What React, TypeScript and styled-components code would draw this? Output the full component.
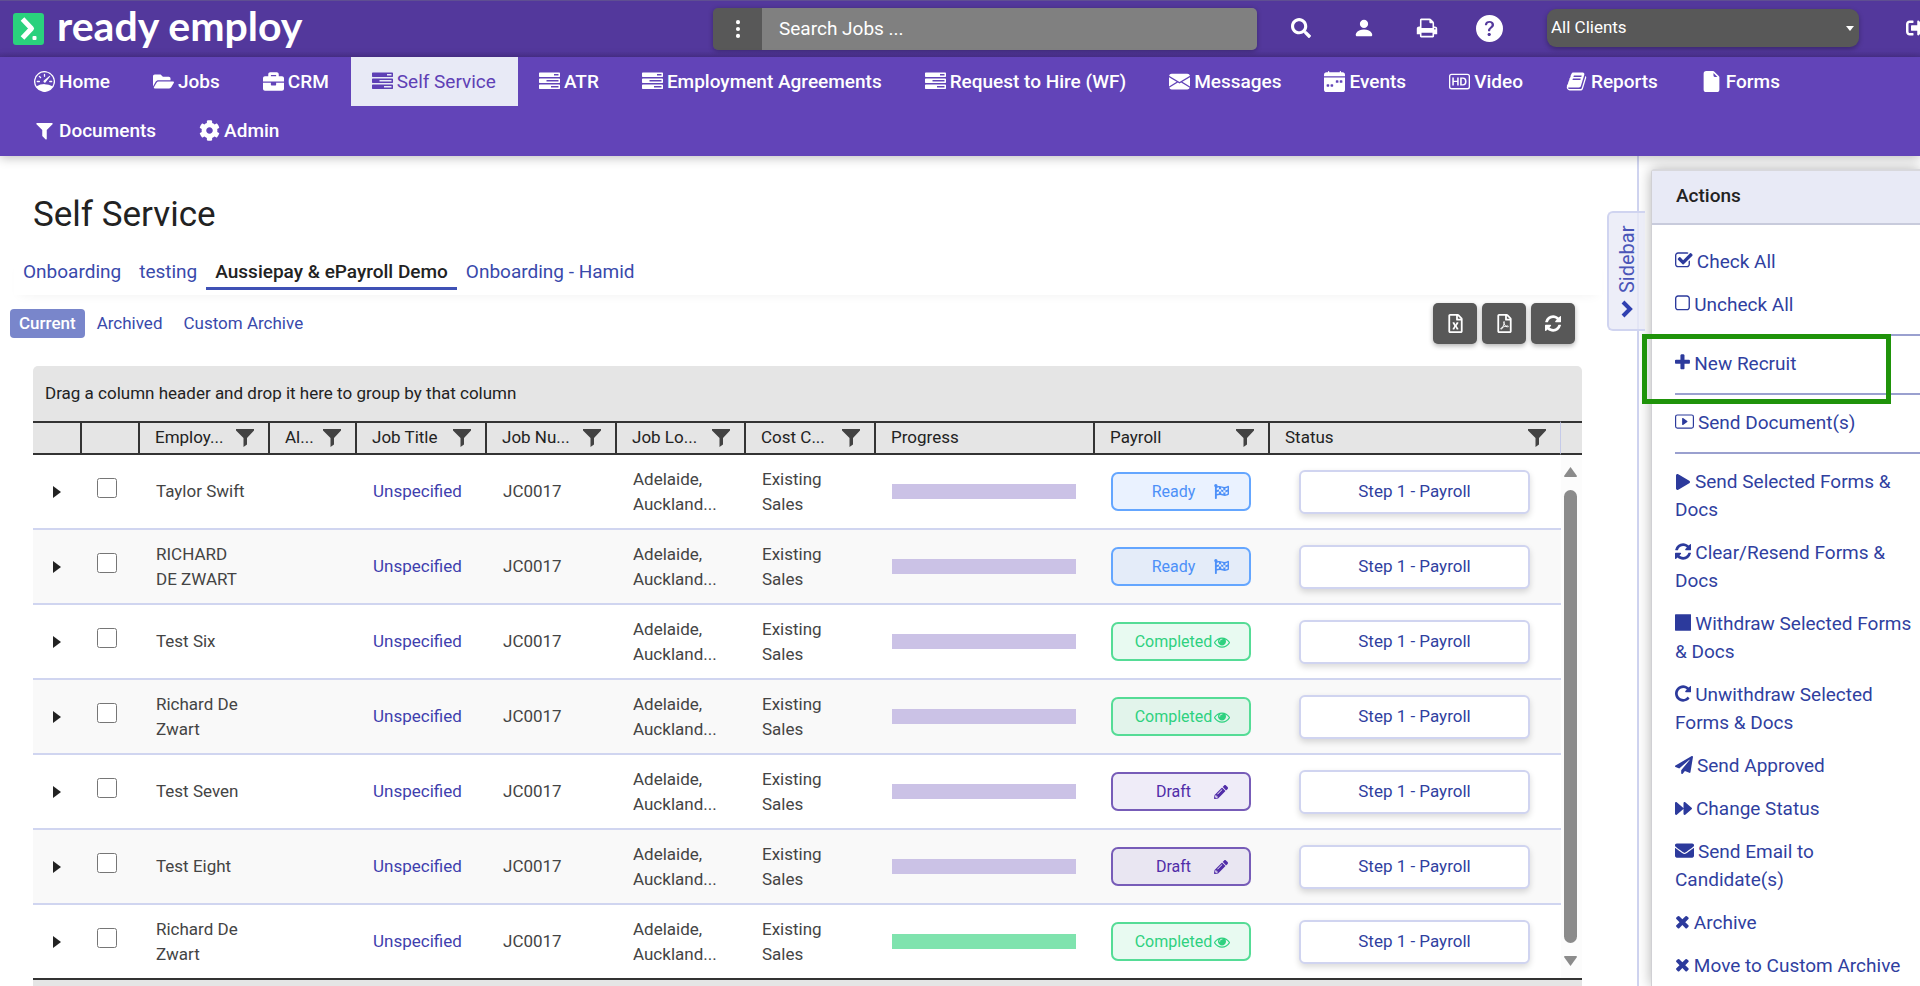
import React from "react";
import styled, { createGlobalStyle, css } from "styled-components";
import {
  FaBriefcase,
  FaCog,
  FaEnvelope,
  FaFlagCheckered,
  FaFolderOpen,
  FaForward,
  FaPaperPlane,
  FaPencilAlt,
  FaPlay,
  FaRegFileExcel,
  FaRegFilePdf,
  FaSearch,
  FaSignOutAlt,
} from "react-icons/fa";
import {
  BsBadgeHd,
  BsCalendarWeekFill,
  BsEnvelopeFill,
  BsFileEarmarkFill,
  BsPersonFill,
  BsPlayBtn,
  BsQuestionCircleFill,
  BsSpeedometer,
  BsThreeDotsVertical,
} from "react-icons/bs";

/* ---------- icons ---------- */

/* Glyphs are drawn on a 1792-unit grid; left and span trim the side bearings. */
const glyph = (d: string, left = 0, span = 1792) =>
  function Glyph() {
    return (
      <svg viewBox={`${left} 0 ${span} 1792`} height="1em" fill="currentColor" aria-hidden="true">
        <path d={d} />
      </svg>
    );
  };

const TasksIcon = glyph(
  "M1024 1408h640v-128h-640v128zm-384-512h1024v-128h-1024v128zm640-512h384v-128h-384v128zm512 832v256q0 26-19 45t-45 19h-1664q-26 0-45-19t-19-45v-256q0-26 19-45t45-19h1664q26 0 45 19t19 45zm0-512v256q0 26-19 45t-45 19h-1664q-26 0-45-19t-19-45v-256q0-26 19-45t45-19h1664q26 0 45 19t19 45zm0-512v256q0 26-19 45t-45 19h-1664q-26 0-45-19t-19-45v-256q0-26 19-45t45-19h1664q26 0 45 19t19 45z"
);
const RefreshIcon = glyph(
  "M1639 1056q0 5-1 7-64 268-268 434.5t-478 166.5q-146 0-282.5-55t-243.5-157l-129 129q-19 19-45 19t-45-19-19-45v-448q0-26 19-45t45-19h448q26 0 45 19t19 45-19 45l-137 137q71 66 161 102t187 36q134 0 250-65t186-179q11-17 53-117 8-23 30-23h192q13 0 22.5 9.5t9.5 22.5zm25-800v448q0 26-19 45t-45 19h-448q-26 0-45-19t-19-45 19-45l138-138q-148-137-349-137-134 0-250 65t-186 179q-11 17-53 117-8 23-30 23h-199q-13 0-22.5-9.5t-9.5-22.5v-7q65-268 270-434.5t480-166.5q146 0 284 55.5t245 156.5l130-129q19-19 45-19t45 19 19 45z",
  128,
  1536
);
const RepeatIcon = glyph(
  "M1664 256v448q0 26-19 45t-45 19h-448q-42 0-59-40-17-39 14-69l138-138q-148-137-349-137-104 0-198.5 40.5t-163.5 109.5-109.5 163.5-40.5 198.5 40.5 198.5 109.5 163.5 163.5 109.5 198.5 40.5q119 0 225-52t179-147q7-10 23-12 15 0 25 9l137 138q9 8 9.5 20.5t-7.5 22.5q-109 132-264 204.5t-327 72.5q-156 0-298-61t-245-164-164-245-61-298 61-298 164-245 245-164 298-61q147 0 284.5 55.5t244.5 156.5l130-129q29-31 70-14 39 17 39 59z",
  128,
  1536
);
const CheckSquareIcon = glyph(
  "M1472 930v318q0 119-84.5 203.5t-203.5 84.5h-832q-119 0-203.5-84.5t-84.5-203.5v-832q0-119 84.5-203.5t203.5-84.5h832q63 0 117 25 15 7 18 23 3 17-9 29l-49 49q-10 10-23 10-3 0-9-2-23-6-45-6h-832q-66 0-113 47t-47 113v832q0 66 47 113t113 47h832q66 0 113-47t47-113v-254q0-13 9-22l64-64q10-10 23-10 6 0 12 3 20 8 20 29zm231-489l-814 814q-24 24-57 24t-57-24l-430-430q-24-24-24-57t24-57l110-110q24-24 57-24t57 24l263 263 647-647q24-24 57-24t57 24l110 110q24 24 24 57t-24 57z",
  64,
  1680
);
const SquareIcon = glyph(
  "M1312 256h-832q-66 0-113 47t-47 113v832q0 66 47 113t113 47h832q66 0 113-47t47-113v-832q0-66-47-113t-113-47zm288 160v832q0 119-84.5 203.5t-203.5 84.5h-832q-119 0-203.5-84.5t-84.5-203.5v-832q0-119 84.5-203.5t203.5-84.5h832q119 0 203.5 84.5t84.5 203.5z",
  192,
  1440
);
const PlusIcon = glyph(
  "M1600 736v192q0 40-28 68t-68 28h-416v416q0 40-28 68t-68 28h-192q-40 0-68-28t-28-68v-416h-416q-40 0-68-28t-28-68v-192q0-40 28-68t68-28h416v-416q0-40 28-68t68-28h192q40 0 68 28t28 68v416h416q40 0 68 28t28 68z",
  192,
  1440
);
const TimesIcon = glyph(
  "M1490 1322q0 40-28 68l-136 136q-28 28-68 28t-68-28l-294-294-294 294q-28 28-68 28t-68-28l-136-136q-28-28-28-68t28-68l294-294-294-294q-28-28-28-68t28-68l136-136q28-28 68-28t68 28l294 294 294-294q28-28 68-28t68 28l136 136q28 28 28 68t-28 68l-294 294 294 294q28 28 28 68z",
  200,
  1400
);
const StopIcon = glyph(
  "M1664 192v1408q0 26-19 45t-45 19h-1408q-26 0-45-19t-19-45v-1408q0-26 19-45t45-19h1408q26 0 45 19t19 45z",
  128,
  1536
);
const PrintIcon = glyph(
  "M448 1536h896v-256h-896v256zm0-640h896v-384h-160q-40 0-68-28t-28-68v-160h-640v640zm1152 64q0-26-19-45t-45-19-45 19-19 45 19 45 45 19 45-19 19-45zm128 0v416q0 13-9.5 22.5t-22.5 9.5h-224v160q0 40-28 68t-68 28h-960q-40 0-68-28t-28-68v-160h-224q-13 0-22.5-9.5t-9.5-22.5v-416q0-79 56.5-135.5t135.5-56.5h64v-544q0-40 28-68t68-28h672q40 0 88 20t76 48l152 152q28 28 48 76t20 88v256h64q79 0 135.5 56.5t56.5 135.5z"
);
const EyeIcon = glyph(
  "M1664 960q-152-236-381-353 61 104 61 225 0 185-131.5 316.5t-316.5 131.5-316.5-131.5-131.5-316.5q0-121 61-225-229 117-381 353 133 205 333.5 326.5t434.5 121.5 434.5-121.5 333.5-326.5zm-720-384q0-20-14-34t-34-14q-125 0-214.5 89.5t-89.5 214.5q0 20 14 34t34 14 34-14 14-34q0-86 61-147t147-61q20 0 34-14t14-34zm848 384q0 34-20 69-140 230-376.5 368.5t-499.5 138.5-499.5-139-376.5-368q-20-35-20-69t20-69q140-229 376.5-368t499.5-139 499.5 139 376.5 368q20 35 20 69z"
);
const FilterIcon = glyph(
  "M1595 295q17 41-14 70l-493 493v742q0 42-39 59-13 5-25 5-27 0-45-19l-256-256q-19-19-19-45v-486l-493-493q-31-29-14-70 17-39 59-39h1280q42 0 59 39z"
);
const BookIcon = glyph(
  "M1703 478q40 57 18 129l-275 906q-19 64-76.5 107.5t-122.5 43.5h-923q-77 0-148.5-53.5t-99.5-131.5q-24-67-2-127 0-4 3-27t4-37q1-8-3-21.5t-3-19.5q2-11 8-21t16.5-23.5 16.5-23.5q23-38 45-91.5t30-91.5q3-10 .5-30t-.5-28q3-11 17-28t17-23q21-36 42-92t25-90q1-9-2.5-32t.5-28q4-13 22-30.5t22-22.5q19-26 42.5-84.5t27.5-96.5q1-8-3-25.5t-2-26.5q2-8 9-18t18-23 17-21q8-12 16.5-30.5t15-35 16-36 19.5-32 26.5-23.5 36-11.5 47.5 5.5l-1 3q38-9 51-9h761q74 0 114 56t18 130l-274 906q-36 119-71.5 153.5t-128.5 34.5h-869q-27 0-38 15-11 16-1 43 24 70 144 70h923q29 0 56-15.5t35-41.5l300-987q7-22 5-57 38 15 59 43zm-1064 2q-4 13 2 22.5t20 9.5h608q13 0 25.5-9.5t16.5-22.5l21-64q4-13-2-22.5t-20-9.5h-608q-13 0-25.5 9.5t-16.5 22.5zm-83 256q-4 13 2 22.5t20 9.5h608q13 0 25.5-9.5t16.5-22.5l21-64q4-13-2-22.5t-20-9.5h-608q-13 0-25.5 9.5t-16.5 22.5z"
);

const Chevron = () => (
  <svg viewBox="0 0 12 18" width="12" height="18" fill="none" stroke="currentColor" strokeWidth="4" aria-hidden="true">
    <path d="M2 2l7 7-7 7" />
  </svg>
);

const Funnel = () => (
  <svg viewBox="0 0 18 18" width="18" height="18" fill="#424242" aria-hidden="true">
    <path d="M0 0h18v1.5L11 9v6.5L7.5 18V9L0 1.5z" />
  </svg>
);

const LogoMark = () => (
  <svg viewBox="0 0 31 32" width="31" height="32" aria-hidden="true">
    <rect width="31" height="32" rx="3" fill="#2ad17d" />
    <path d="M9.500 6l9 9.500-9 9.500" fill="none" stroke="#fff" strokeWidth="5" strokeLinejoin="round" />
    <rect x="19.500" y="23" width="4" height="4" rx="1" fill="#fff" />
  </svg>
);

/* ---------- page ---------- */

const GlobalStyle = createGlobalStyle`
  *, *::before, *::after { box-sizing: border-box; }
  body {
    margin: 0;
    background: #fff;
    color: #222;
    font-family: Roboto, "Liberation Sans", sans-serif;
    font-size: 17px;
  }
  button, input, select { font: inherit; }
  a { text-decoration: none; color: inherit; }
  svg { display: block; flex: none; }
`;

const Page = styled.div`
  display: flex;
  flex-direction: column;
  height: 100vh;
  overflow: hidden;
`;

const TopBar = styled.header`
  flex: none;
  display: flex;
  align-items: center;
  height: 57px;
  border-top: 1px solid #5f4f92;
  background: linear-gradient(#53389c 90%, #4b318f);
  color: #fff;
`;

const Brand = styled.a`
  flex: 1;
  display: flex;
  align-items: center;
  gap: 13px;
  padding-left: 13px;
  color: #fff;
`;

const BrandName = styled.span`
  font: 700 41px/44px Lato, sans-serif;
  padding-bottom: 7px;
`;

const SearchBox = styled.form`
  display: flex;
  width: 544px;
  height: 42px;
  border-radius: 5px;
  box-shadow: 0 1px 5px rgba(0, 0, 0, 0.3);
`;

const SearchMenu = styled.button`
  display: flex;
  align-items: center;
  justify-content: center;
  width: 49px;
  padding: 0;
  border: 0;
  border-radius: 5px 0 0 5px;
  background: #585858;
  color: #fff;
  font-size: 22px;
`;

const SearchInput = styled.input`
  flex: 1;
  min-width: 0;
  padding: 0 17px 2px;
  border: 0;
  border-radius: 0 5px 5px 0;
  background: #808080;
  color: #fff;
  font-size: 19px;
  &::placeholder { color: #fff; opacity: 1; }
`;

const TopIcons = styled.div`
  display: flex;
  margin: 0 26px 0 12px;
`;

const TopIcon = styled.button<{ $size?: number }>`
  display: flex;
  align-items: center;
  justify-content: center;
  width: 63px;
  height: 42px;
  padding: 0 0 2px;
  border: 0;
  background: none;
  color: #fff;
  font-size: ${(p) => p.$size ?? 20}px;
`;

const ClientPicker = styled.label`
  display: grid;
  align-items: center;
  width: 312px;
  padding-bottom: 2px;
  color: #fff;
  > * { grid-area: 1 / 1; }
  > svg { justify-self: end; margin-right: 5px; pointer-events: none; }
`;

const ClientSelect = styled.select`
  appearance: none;
  width: 100%;
  height: 38px;
  padding: 0 4px 2px;
  border: 0;
  border-radius: 9px;
  background: #585858;
  box-shadow: 0 2px 5px rgba(0, 0, 0, 0.3);
  color: #fff;
`;

const SignOut = styled.button`
  width: 14px;
  margin-left: 47px;
  padding: 0 0 2px;
  border: 0;
  background: none;
  color: #fff;
  font-size: 20px;
`;

const NavBar = styled.nav`
  position: relative;
  z-index: 2;
  flex: none;
  display: flex;
  flex-wrap: wrap;
  padding: 0 13px 1px;
  background: #6244b8;
  box-shadow: 0 2px 10px rgba(0, 0, 0, 0.25);
`;

const NavItem = styled.a<{ $active?: boolean }>`
  display: flex;
  align-items: center;
  gap: 4px;
  height: 49px;
  padding: 0 22px 1px 21px;
  color: #fff;
  font-size: 19px;
  font-weight: 500;
  > svg { width: 21px; height: 21px; }
  ${(p) =>
    p.$active &&
    css`
      background: #e8eaf6;
      color: #5e40b5;
      font-weight: 400;
    `}
`;

const Body = styled.div`
  flex: 1;
  display: flex;
  min-height: 0;
`;

const Main = styled.main`
  flex: 1;
  display: flex;
  flex-direction: column;
  min-width: 0;
  padding: 38px 55px 0 10px;
`;

const Title = styled.h1`
  margin: 0 0 21px;
  padding-left: 23px;
  font-size: 35px;
  line-height: 42px;
  font-weight: 400;
`;

const Tabs = styled.div`
  display: flex;
  margin: 0 -20px 0 4px;
  padding-bottom: 5px;
  box-shadow: 0 6px 12px -6px rgba(0, 0, 0, 0.06);
`;

const Tab = styled.a<{ $active?: boolean }>`
  padding: 4px 9px;
  border-bottom: 3px solid ${(p) => (p.$active ? "#3f51b5" : "transparent")};
  color: ${(p) => (p.$active ? "#222" : "#3949ab")};
  font-size: 19px;
  line-height: 22px;
  font-weight: ${(p) => (p.$active ? 500 : 400)};
`;

const Toolbar = styled.div`
  display: flex;
  align-items: center;
  margin: 8px 0 22px;
  padding-right: 7px;
`;

const Pills = styled.div`
  flex: 1;
  display: flex;
  gap: 3px;
`;

const Pill = styled.a<{ $active?: boolean }>`
  padding: 0 9px;
  border-radius: 4px;
  background: ${(p) => (p.$active ? "#7986cb" : "none")};
  color: ${(p) => (p.$active ? "#fff" : "#3949ab")};
  font-weight: ${(p) => (p.$active ? 500 : 400)};
  line-height: 29px;
`;

const ToolButtons = styled.div`
  display: flex;
  gap: 5px;
`;

const ToolButton = styled.button`
  display: flex;
  align-items: center;
  justify-content: center;
  width: 44px;
  height: 41px;
  padding: 0;
  border: 0;
  border-radius: 5px;
  background: #585858;
  box-shadow: 0 2px 5px rgba(0, 0, 0, 0.3);
  color: #fff;
  font-size: 19px;
`;

/* ---------- grid ---------- */

const Grid = styled.section`
  flex: 1;
  margin-left: 23px;
  border-radius: 5px 5px 0 0;
  background: #e5e5e5;
`;

const GroupPanel = styled.div`
  padding: 0 12px;
  line-height: 55px;
`;

const GridBody = styled.div`
  display: flex;
  border-bottom: 2px solid #333;
`;

const Table = styled.table`
  flex: 1;
  width: 0;
  table-layout: fixed;
  border-collapse: separate;
  border-spacing: 0;
  background: #fff;
  color: #444;
  line-height: 25px;
`;

const headEdge = css`
  height: 34px;
  border-top: 2px solid #333;
  border-bottom: 2px solid #333;
  background: #e5e5e5;
`;

const HeadCell = styled.th<{ $last?: boolean }>`
  ${headEdge}
  padding: 0 14px 0 15px;
  border-right: ${(p) => (p.$last ? "1px solid #c5cae9" : "2px solid #333")};
  color: #222;
  font-weight: 400;
  text-align: left;
`;

const HeadLabel = styled.div`
  display: flex;
  align-items: center;
  justify-content: space-between;
  height: 30px;
  padding-bottom: 1px;
  white-space: nowrap;
`;

const Row = styled.tr`
  background: #fff;
  &:nth-child(even) { background: #f9f9f9; }
  &:last-child > td { border-bottom: 0; height: 73px; }
`;

const Cell = styled.td<{ $center?: boolean }>`
  height: 75px;
  padding: 0 20px 0 16px;
  border-bottom: 2px solid #d0d5f0;
  vertical-align: middle;
  ${(p) =>
    p.$center &&
    css`
      padding: 0 2px 0 0;
      text-align: center;
    `}
`;

const Expander = styled.button`
  display: block;
  margin: 0 auto;
  padding: 0;
  border: 0;
  background: none;
  color: #222;
`;

const Tick = styled.input`
  display: block;
  width: 20px;
  height: 20px;
  margin: 0 0 8px 15px;
`;

const Link = styled.a`
  color: #3f3fae;
`;

const Bar = styled.div<{ $done?: boolean }>`
  width: 184px;
  height: 15px;
  background: ${(p) => (p.$done ? "#7fe3ae" : "#cbc2e6")};
`;

const badgeTones = {
  Ready: { line: "#64a6ff", fill: "rgba(64, 140, 255, 0.11)", text: "#4d90f8" },
  Completed: { line: "#55dc96", fill: "rgba(42, 209, 125, 0.11)", text: "#2ed17f" },
  Draft: { line: "#775cb8", fill: "rgba(98, 68, 184, 0.1)", text: "#512da8" },
};
type Payroll = keyof typeof badgeTones;

const Badge = styled.button<{ $tone: Payroll }>`
  display: grid;
  grid-template-columns: 81px 18px;
  align-items: center;
  justify-content: center;
  justify-items: center;
  width: 140px;
  height: 39px;
  padding: 0 0 0 3px;
  border: 2px solid ${(p) => badgeTones[p.$tone].line};
  border-radius: 7px;
  background: ${(p) => badgeTones[p.$tone].fill};
  color: ${(p) => badgeTones[p.$tone].text};
  font-size: 16px;
  > svg { justify-self: start; }
`;

const StepButton = styled.button`
  display: block;
  width: 100%;
  height: 44px;
  border: 2px solid #d0d4f0;
  border-radius: 6px;
  background: #fff;
  box-shadow: 0 3px 6px rgba(0, 0, 0, 0.15);
  color: #303f9f;
`;

const StepCell = styled(Cell)`
  padding: 0 31px 0 29px;
`;

const ScrollColumn = styled.div`
  display: flex;
  flex-direction: column;
  width: 21px;
  background: #fcfcfc;
`;

const ScrollHead = styled.div`
  ${headEdge}
`;

const ScrollTrack = styled.div`
  flex: 1;
  display: flex;
  flex-direction: column;
  align-items: center;
  gap: 13px;
  padding: 12px 2px 12px 0;
`;

const ScrollThumb = styled.div`
  flex: 1;
  width: 13px;
  border-radius: 7px;
  background: #8b8b8b;
`;

/* ---------- actions panel ---------- */

const Aside = styled.aside`
  position: relative;
  flex: none;
  width: 283px;
  padding: 13px 0 0 12px;
  border-left: 2px solid #d0d4f0;
`;

const SidebarToggle = styled.button`
  position: absolute;
  top: 55px;
  left: -32px;
  display: flex;
  align-items: center;
  justify-content: flex-end;
  gap: 7px;
  width: 38px;
  height: 120px;
  padding: 12px 0;
  writing-mode: vertical-rl;
  transform: rotate(180deg);
  border: 2px solid #d0d4f0;
  border-left: 0;
  border-radius: 0 6px 6px 0;
  background: rgba(232, 234, 246, 0.8);
  color: #4a55b8;
  font-size: 20px;
  > svg { transform: rotate(180deg); color: #3040b0; }
`;

const Panel = styled.div`
  height: 100%;
  border-top: 2px solid #d8d8dc;
  border-left: 1px solid #d0d0d4;
  border-radius: 4px 0 0 0;
  background: #fff;
  box-shadow: 0 0 14px rgba(0, 0, 0, 0.3);
`;

const PanelTitle = styled.h2`
  margin: 0;
  padding: 0 0 2px 24px;
  border-bottom: 2px solid #c8cbdc;
  background: #e8eaf6;
  font-size: 19px;
  line-height: 50px;
  font-weight: 500;
`;

const ActionList = styled.ul`
  margin: 0;
  padding: 16px 0 0 23px;
  list-style: none;
`;

const Action = styled.li<{ $ruled?: boolean }>`
  position: relative;
  padding: 7px 0 8px;
  font-size: 19px;
  line-height: 28px;
  color: #303f9f;
  ${(p) =>
    p.$ruled &&
    css`
      margin-bottom: 7px;
      padding-bottom: 15px;
      border-bottom: 2px solid #9aa0cf;
    `}
  svg { display: inline-block; vertical-align: -2px; margin-right: 4px; color: #2c3a9c; }
`;

const Highlight = styled.span`
  position: absolute;
  top: -9px;
  left: -33px;
  width: 249px;
  height: 70px;
  border: 5px solid #1f930a;
  pointer-events: none;
`;

const nav: { label: string; icon: React.ReactNode; active?: boolean }[] = [
  { label: "Home", icon: <BsSpeedometer /> },
  { label: "Jobs", icon: <FaFolderOpen /> },
  { label: "CRM", icon: <FaBriefcase /> },
  { label: "Self Service", icon: <TasksIcon />, active: true },
  { label: "ATR", icon: <TasksIcon /> },
  { label: "Employment Agreements", icon: <TasksIcon /> },
  { label: "Request to Hire (WF)", icon: <TasksIcon /> },
  { label: "Messages", icon: <BsEnvelopeFill /> },
  { label: "Events", icon: <BsCalendarWeekFill /> },
  { label: "Video", icon: <BsBadgeHd /> },
  { label: "Reports", icon: <BookIcon /> },
  { label: "Forms", icon: <BsFileEarmarkFill /> },
  { label: "Documents", icon: <FilterIcon /> },
  { label: "Admin", icon: <FaCog /> },
];

const columns: { label: string; width?: number; filter?: boolean }[] = [
  { label: "", width: 49 },
  { label: "", width: 58 },
  { label: "Employ...", width: 130, filter: true },
  { label: "Al...", width: 87, filter: true },
  { label: "Job Title", width: 130, filter: true },
  { label: "Job Nu...", width: 130, filter: true },
  { label: "Job Lo...", width: 129, filter: true },
  { label: "Cost C...", width: 130, filter: true },
  { label: "Progress", width: 219 },
  { label: "Payroll", width: 175, filter: true },
  { label: "Status", filter: true },
];

const rows: { name: string; payroll: Payroll; done?: boolean }[] = [
  { name: "Taylor Swift", payroll: "Ready" },
  { name: "RICHARD DE ZWART", payroll: "Ready" },
  { name: "Test Six", payroll: "Completed" },
  { name: "Richard De Zwart", payroll: "Completed" },
  { name: "Test Seven", payroll: "Draft" },
  { name: "Test Eight", payroll: "Draft" },
  { name: "Richard De Zwart", payroll: "Completed", done: true },
];

const badgeIcons: Record<Payroll, React.ReactNode> = {
  Ready: <FaFlagCheckered size={15} />,
  Completed: <EyeIcon />,
  Draft: <FaPencilAlt size={14} />,
};

const actions: { label: string; icon: React.ReactNode; ruled?: boolean; marked?: boolean }[] = [
  { label: "Check All", icon: <CheckSquareIcon /> },
  { label: "Uncheck All", icon: <SquareIcon />, ruled: true },
  { label: "New Recruit", icon: <PlusIcon />, ruled: true, marked: true },
  { label: "Send Document(s)", icon: <BsPlayBtn />, ruled: true },
  { label: "Send Selected Forms & Docs", icon: <FaPlay size={16} /> },
  { label: "Clear/Resend Forms & Docs", icon: <RefreshIcon /> },
  { label: "Withdraw Selected Forms & Docs", icon: <StopIcon /> },
  { label: "Unwithdraw Selected Forms & Docs", icon: <RepeatIcon /> },
  { label: "Send Approved", icon: <FaPaperPlane size={18} /> },
  { label: "Change Status", icon: <FaForward size={17} /> },
  { label: "Send Email to Candidate(s)", icon: <FaEnvelope /> },
  { label: "Archive", icon: <TimesIcon /> },
  { label: "Move to Custom Archive", icon: <TimesIcon /> },
];

export default function App() {
  return (
    <Page>
      <GlobalStyle />
      <TopBar>
        <Brand href="#">
          <LogoMark />
          <BrandName>ready employ</BrandName>
        </Brand>
        <SearchBox>
          <SearchMenu type="button" aria-label="Search options">
            <BsThreeDotsVertical />
          </SearchMenu>
          <SearchInput type="text" placeholder="Search Jobs ..." aria-label="Search jobs" />
        </SearchBox>
        <TopIcons>
          <TopIcon aria-label="Search"><FaSearch /></TopIcon>
          <TopIcon aria-label="Profile" $size={22}><BsPersonFill /></TopIcon>
          <TopIcon aria-label="Print" $size={22}><PrintIcon /></TopIcon>
          <TopIcon aria-label="Help" $size={27}><BsQuestionCircleFill /></TopIcon>
        </TopIcons>
        <ClientPicker>
          <ClientSelect aria-label="Client">
            <option>All Clients</option>
          </ClientSelect>
          <svg width="8" height="5" viewBox="0 0 8 5" fill="currentColor" aria-hidden="true">
            <path d="M0 0h8L4 5z" />
          </svg>
        </ClientPicker>
        <SignOut aria-label="Sign out"><FaSignOutAlt /></SignOut>
      </TopBar>

      <NavBar>
        {nav.map((n) => (
          <NavItem key={n.label} href="#" $active={n.active}>
            {n.icon}
            {n.label}
          </NavItem>
        ))}
      </NavBar>

      <Body>
        <Main>
          <Title>Self Service</Title>
          <Tabs>
            <Tab href="#">Onboarding</Tab>
            <Tab href="#">testing</Tab>
            <Tab href="#" $active>Aussiepay &amp; ePayroll Demo</Tab>
            <Tab href="#">Onboarding - Hamid</Tab>
          </Tabs>
          <Toolbar>
            <Pills>
              <Pill href="#" $active>Current</Pill>
              <Pill href="#">Archived</Pill>
              <Pill href="#">Custom Archive</Pill>
            </Pills>
            <ToolButtons>
              <ToolButton aria-label="Export to Excel"><FaRegFileExcel /></ToolButton>
              <ToolButton aria-label="Export to PDF"><FaRegFilePdf /></ToolButton>
              <ToolButton aria-label="Refresh"><RefreshIcon /></ToolButton>
            </ToolButtons>
          </Toolbar>

          <Grid>
            <GroupPanel>Drag a column header and drop it here to group by that column</GroupPanel>
            <GridBody>
              <Table>
                <colgroup>
                  {columns.map((c, i) => (
                    <col key={i} width={c.width} />
                  ))}
                </colgroup>
                <thead>
                  <tr>
                    {columns.map((c, i) => (
                      <HeadCell key={i} $last={i === columns.length - 1}>
                        <HeadLabel>
                          {c.label}
                          {c.filter && <Funnel />}
                        </HeadLabel>
                      </HeadCell>
                    ))}
                  </tr>
                </thead>
                <tbody>
                  {rows.map((r, i) => (
                    <Row key={i}>
                      <Cell $center>
                        <Expander aria-label={`Expand ${r.name}`}>
                          <svg width="8" height="12" viewBox="0 0 8 12" fill="currentColor">
                            <path d="M0 0l8 6-8 6z" />
                          </svg>
                        </Expander>
                      </Cell>
                      <Cell $center>
                        <Tick type="checkbox" aria-label={`Select ${r.name}`} />
                      </Cell>
                      <Cell>{r.name}</Cell>
                      <Cell />
                      <Cell><Link href="#">Unspecified</Link></Cell>
                      <Cell>JC0017</Cell>
                      <Cell>Adelaide, Auckland...</Cell>
                      <Cell>Existing Sales</Cell>
                      <Cell><Bar $done={r.done} /></Cell>
                      <Cell>
                        <Badge $tone={r.payroll}>
                          {r.payroll}
                          {badgeIcons[r.payroll]}
                        </Badge>
                      </Cell>
                      <StepCell>
                        <StepButton>Step 1 - Payroll</StepButton>
                      </StepCell>
                    </Row>
                  ))}
                </tbody>
              </Table>
              <ScrollColumn>
                <ScrollHead />
                <ScrollTrack>
                  <svg width="13" height="10" viewBox="0 0 13 10" fill="#8b8b8b">
                    <path d="M6.500 0L13 9a1 1 0 0 1-1 1H1a1 1 0 0 1-1-1z" />
                  </svg>
                  <ScrollThumb />
                  <svg width="13" height="10" viewBox="0 0 13 10" fill="#8b8b8b">
                    <path d="M6.500 10L13 1a1 1 0 0 0-1-1H1a1 1 0 0 0-1 1z" />
                  </svg>
                </ScrollTrack>
              </ScrollColumn>
            </GridBody>
          </Grid>
        </Main>

        <Aside>
          <Panel>
            <PanelTitle>Actions</PanelTitle>
            <ActionList>
              {actions.map((a) => (
                <Action key={a.label} $ruled={a.ruled}>
                  <a href="#">
                    {a.icon}
                    {a.label}
                  </a>
                  {a.marked && <Highlight />}
                </Action>
              ))}
            </ActionList>
          </Panel>
          <SidebarToggle>
            <Chevron />
            Sidebar
          </SidebarToggle>
        </Aside>
      </Body>
    </Page>
  );
}
